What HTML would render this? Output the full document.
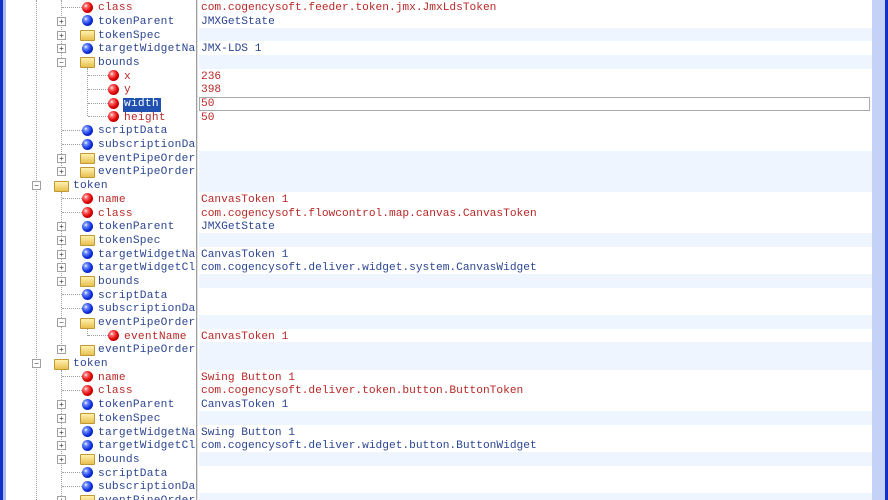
<!DOCTYPE html>
<html style="overflow:hidden;height:500px"><head><meta charset="utf-8"><style>
body{margin:0;width:888px;height:500px;overflow:hidden;background:#fff;position:relative;font-family:"Liberation Mono",monospace;font-size:11.2px}
.lb{position:absolute;left:0;top:0;width:3px;height:500px;background:#1030c8}
.lb2{position:absolute;left:3px;top:0;width:3px;height:500px;background:#a8bcf0}
.rb{position:absolute;left:872px;top:0;width:13px;height:500px;background:#c4d2f8}
.rb2{position:absolute;left:885px;top:0;width:3px;height:500px;background:#1030c8}
.div{position:absolute;left:196px;top:0;width:1px;height:500px;background:#a0a0a0;border-right:1px solid #e0e0e0}
.vl{position:absolute;width:0;border-left:1px dotted #a0a0a0}
.rows{position:absolute;left:0;top:0.2px;width:872px;height:500px;overflow:hidden}
.r{position:relative;height:13.69px}
.r.f .v{background:#eef5fe}
.v{position:absolute;left:199px;right:0;top:0;height:13.69px}
.t{position:absolute;top:2px;line-height:13.69px;white-space:nowrap;letter-spacing:.25px}
.val{position:absolute;left:201px;top:2px;line-height:13.69px;white-space:nowrap}
.red{color:#b82828}.blu{color:#2c4690}
.b{position:absolute;top:1.5px;width:11px;height:11px;border-radius:50%}
.b.rd{background:radial-gradient(circle at 35% 35%,#fff 0,#ff7070 18%,#e00000 55%,#800000 100%)}
.b.bl{background:radial-gradient(circle at 35% 35%,#fff 0,#7090ff 18%,#1030e0 55%,#001080 100%)}
.fo{position:absolute;top:2.5px;width:13px;height:9px;background:linear-gradient(#fff2b0,#e8c050);border:1px solid #c09a30;border-radius:1px}
.ex{position:absolute;top:3px;width:7px;height:7px;border:1px solid #a0a0a0;background:#fff;font-size:8px;line-height:7px;text-align:center;color:#333;font-family:"Liberation Sans",sans-serif}
.h{position:absolute;top:6.5px;height:0;border-top:1px dotted #a0a0a0}
</style></head><body>
<div class="lb"></div><div class="lb2"></div>
<div class="vl" style="left:36px;top:0;height:500px"></div>
<div class="vl" style="left:61px;top:0;height:172px"></div>
<div class="vl" style="left:61px;top:192px;height:160px"></div>
<div class="vl" style="left:61px;top:370px;height:130px"></div>
<div class="vl" style="left:87px;top:68px;height:48px"></div>
<div class="vl" style="left:87px;top:328px;height:8px"></div>
<div class="rows">
<div class="r"><div class="h" style="left:62px;width:24px"></div><div class="b rd" style="left:82px"></div><div class="t red" style="left:98px">class</div><div class="v"></div><div class="val red">com.cogencysoft.feeder.token.jmx.JmxLdsToken</div></div>
<div class="r"><div class="ex" style="left:57px">+</div><div class="b bl" style="left:82px"></div><div class="t blu" style="left:98px">tokenParent</div><div class="v"></div><div class="val blu">JMXGetState</div></div>
<div class="r f"><div class="ex" style="left:57px">+</div><div class="fo" style="left:80px"></div><div class="t blu" style="left:98px">tokenSpec</div><div class="v"></div></div>
<div class="r"><div class="ex" style="left:57px">+</div><div class="b bl" style="left:82px"></div><div class="t blu" style="left:98px">targetWidgetNa</div><div class="v"></div><div class="val blu">JMX-LDS 1</div></div>
<div class="r f"><div class="ex" style="left:57px">−</div><div class="fo" style="left:80px"></div><div class="t blu" style="left:98px">bounds</div><div class="v"></div></div>
<div class="r"><div class="h" style="left:88px;width:20px"></div><div class="b rd" style="left:108px"></div><div class="t red" style="left:124px">x</div><div class="v"></div><div class="val red">236</div></div>
<div class="r"><div class="h" style="left:88px;width:20px"></div><div class="b rd" style="left:108px"></div><div class="t red" style="left:124px">y</div><div class="v"></div><div class="val red">398</div></div>
<div class="r"><div class="h" style="left:88px;width:20px"></div><div class="b rd" style="left:108px"></div><div class="t" style="left:123px;background:#2050b0;color:#fff;padding:0 1px;width:36px">width</div><div class="v"></div><div style="position:absolute;left:199px;width:669px;top:1px;height:12px;border:1px solid #a8a8a8;background:#fff"></div><div class="val red">50</div></div>
<div class="r"><div class="h" style="left:88px;width:20px"></div><div class="b rd" style="left:108px"></div><div class="t red" style="left:124px">height</div><div class="v"></div><div class="val red">50</div></div>
<div class="r"><div class="h" style="left:62px;width:20px"></div><div class="b bl" style="left:82px"></div><div class="t blu" style="left:98px">scriptData</div><div class="v"></div></div>
<div class="r"><div class="h" style="left:62px;width:20px"></div><div class="b bl" style="left:82px"></div><div class="t blu" style="left:98px">subscriptionDa</div><div class="v"></div></div>
<div class="r f"><div class="ex" style="left:57px">+</div><div class="fo" style="left:80px"></div><div class="t blu" style="left:98px">eventPipeOrder</div><div class="v"></div></div>
<div class="r f"><div class="ex" style="left:57px">+</div><div class="fo" style="left:80px"></div><div class="t blu" style="left:98px">eventPipeOrder</div><div class="v"></div></div>
<div class="r f"><div class="ex" style="left:32px">−</div><div class="fo" style="left:54px"></div><div class="t blu" style="left:73px">token</div><div class="v"></div></div>
<div class="r"><div class="h" style="left:62px;width:20px"></div><div class="b rd" style="left:82px"></div><div class="t red" style="left:98px">name</div><div class="v"></div><div class="val red">CanvasToken 1</div></div>
<div class="r"><div class="h" style="left:62px;width:20px"></div><div class="b rd" style="left:82px"></div><div class="t red" style="left:98px">class</div><div class="v"></div><div class="val red">com.cogencysoft.flowcontrol.map.canvas.CanvasToken</div></div>
<div class="r"><div class="ex" style="left:57px">+</div><div class="b bl" style="left:82px"></div><div class="t blu" style="left:98px">tokenParent</div><div class="v"></div><div class="val blu">JMXGetState</div></div>
<div class="r f"><div class="ex" style="left:57px">+</div><div class="fo" style="left:80px"></div><div class="t blu" style="left:98px">tokenSpec</div><div class="v"></div></div>
<div class="r"><div class="ex" style="left:57px">+</div><div class="b bl" style="left:82px"></div><div class="t blu" style="left:98px">targetWidgetNa</div><div class="v"></div><div class="val blu">CanvasToken 1</div></div>
<div class="r"><div class="ex" style="left:57px">+</div><div class="b bl" style="left:82px"></div><div class="t blu" style="left:98px">targetWidgetCl</div><div class="v"></div><div class="val blu">com.cogencysoft.deliver.widget.system.CanvasWidget</div></div>
<div class="r f"><div class="ex" style="left:57px">+</div><div class="fo" style="left:80px"></div><div class="t blu" style="left:98px">bounds</div><div class="v"></div></div>
<div class="r"><div class="h" style="left:62px;width:20px"></div><div class="b bl" style="left:82px"></div><div class="t blu" style="left:98px">scriptData</div><div class="v"></div></div>
<div class="r"><div class="h" style="left:62px;width:20px"></div><div class="b bl" style="left:82px"></div><div class="t blu" style="left:98px">subscriptionDa</div><div class="v"></div></div>
<div class="r f"><div class="ex" style="left:57px">−</div><div class="fo" style="left:80px"></div><div class="t blu" style="left:98px">eventPipeOrder</div><div class="v"></div></div>
<div class="r"><div class="h" style="left:88px;width:20px"></div><div class="b rd" style="left:108px"></div><div class="t red" style="left:124px">eventName</div><div class="v"></div><div class="val red">CanvasToken 1</div></div>
<div class="r f"><div class="ex" style="left:57px">+</div><div class="fo" style="left:80px"></div><div class="t blu" style="left:98px">eventPipeOrder</div><div class="v"></div></div>
<div class="r f"><div class="ex" style="left:32px">−</div><div class="fo" style="left:54px"></div><div class="t blu" style="left:73px">token</div><div class="v"></div></div>
<div class="r"><div class="h" style="left:62px;width:20px"></div><div class="b rd" style="left:82px"></div><div class="t red" style="left:98px">name</div><div class="v"></div><div class="val red">Swing Button 1</div></div>
<div class="r"><div class="h" style="left:62px;width:20px"></div><div class="b rd" style="left:82px"></div><div class="t red" style="left:98px">class</div><div class="v"></div><div class="val red">com.cogencysoft.deliver.token.button.ButtonToken</div></div>
<div class="r"><div class="ex" style="left:57px">+</div><div class="b bl" style="left:82px"></div><div class="t blu" style="left:98px">tokenParent</div><div class="v"></div><div class="val blu">CanvasToken 1</div></div>
<div class="r f"><div class="ex" style="left:57px">+</div><div class="fo" style="left:80px"></div><div class="t blu" style="left:98px">tokenSpec</div><div class="v"></div></div>
<div class="r"><div class="ex" style="left:57px">+</div><div class="b bl" style="left:82px"></div><div class="t blu" style="left:98px">targetWidgetNa</div><div class="v"></div><div class="val blu">Swing Button 1</div></div>
<div class="r"><div class="ex" style="left:57px">+</div><div class="b bl" style="left:82px"></div><div class="t blu" style="left:98px">targetWidgetCl</div><div class="v"></div><div class="val blu">com.cogencysoft.deliver.widget.button.ButtonWidget</div></div>
<div class="r f"><div class="ex" style="left:57px">+</div><div class="fo" style="left:80px"></div><div class="t blu" style="left:98px">bounds</div><div class="v"></div></div>
<div class="r"><div class="h" style="left:62px;width:20px"></div><div class="b bl" style="left:82px"></div><div class="t blu" style="left:98px">scriptData</div><div class="v"></div></div>
<div class="r"><div class="h" style="left:62px;width:20px"></div><div class="b bl" style="left:82px"></div><div class="t blu" style="left:98px">subscriptionDa</div><div class="v"></div></div>
<div class="r f"><div class="ex" style="left:57px">+</div><div class="fo" style="left:80px"></div><div class="t blu" style="left:98px">eventPipeOrder</div><div class="v"></div></div>
</div>
<div class="div"></div>
<div class="rb"></div><div class="rb2"></div>
</body></html>
